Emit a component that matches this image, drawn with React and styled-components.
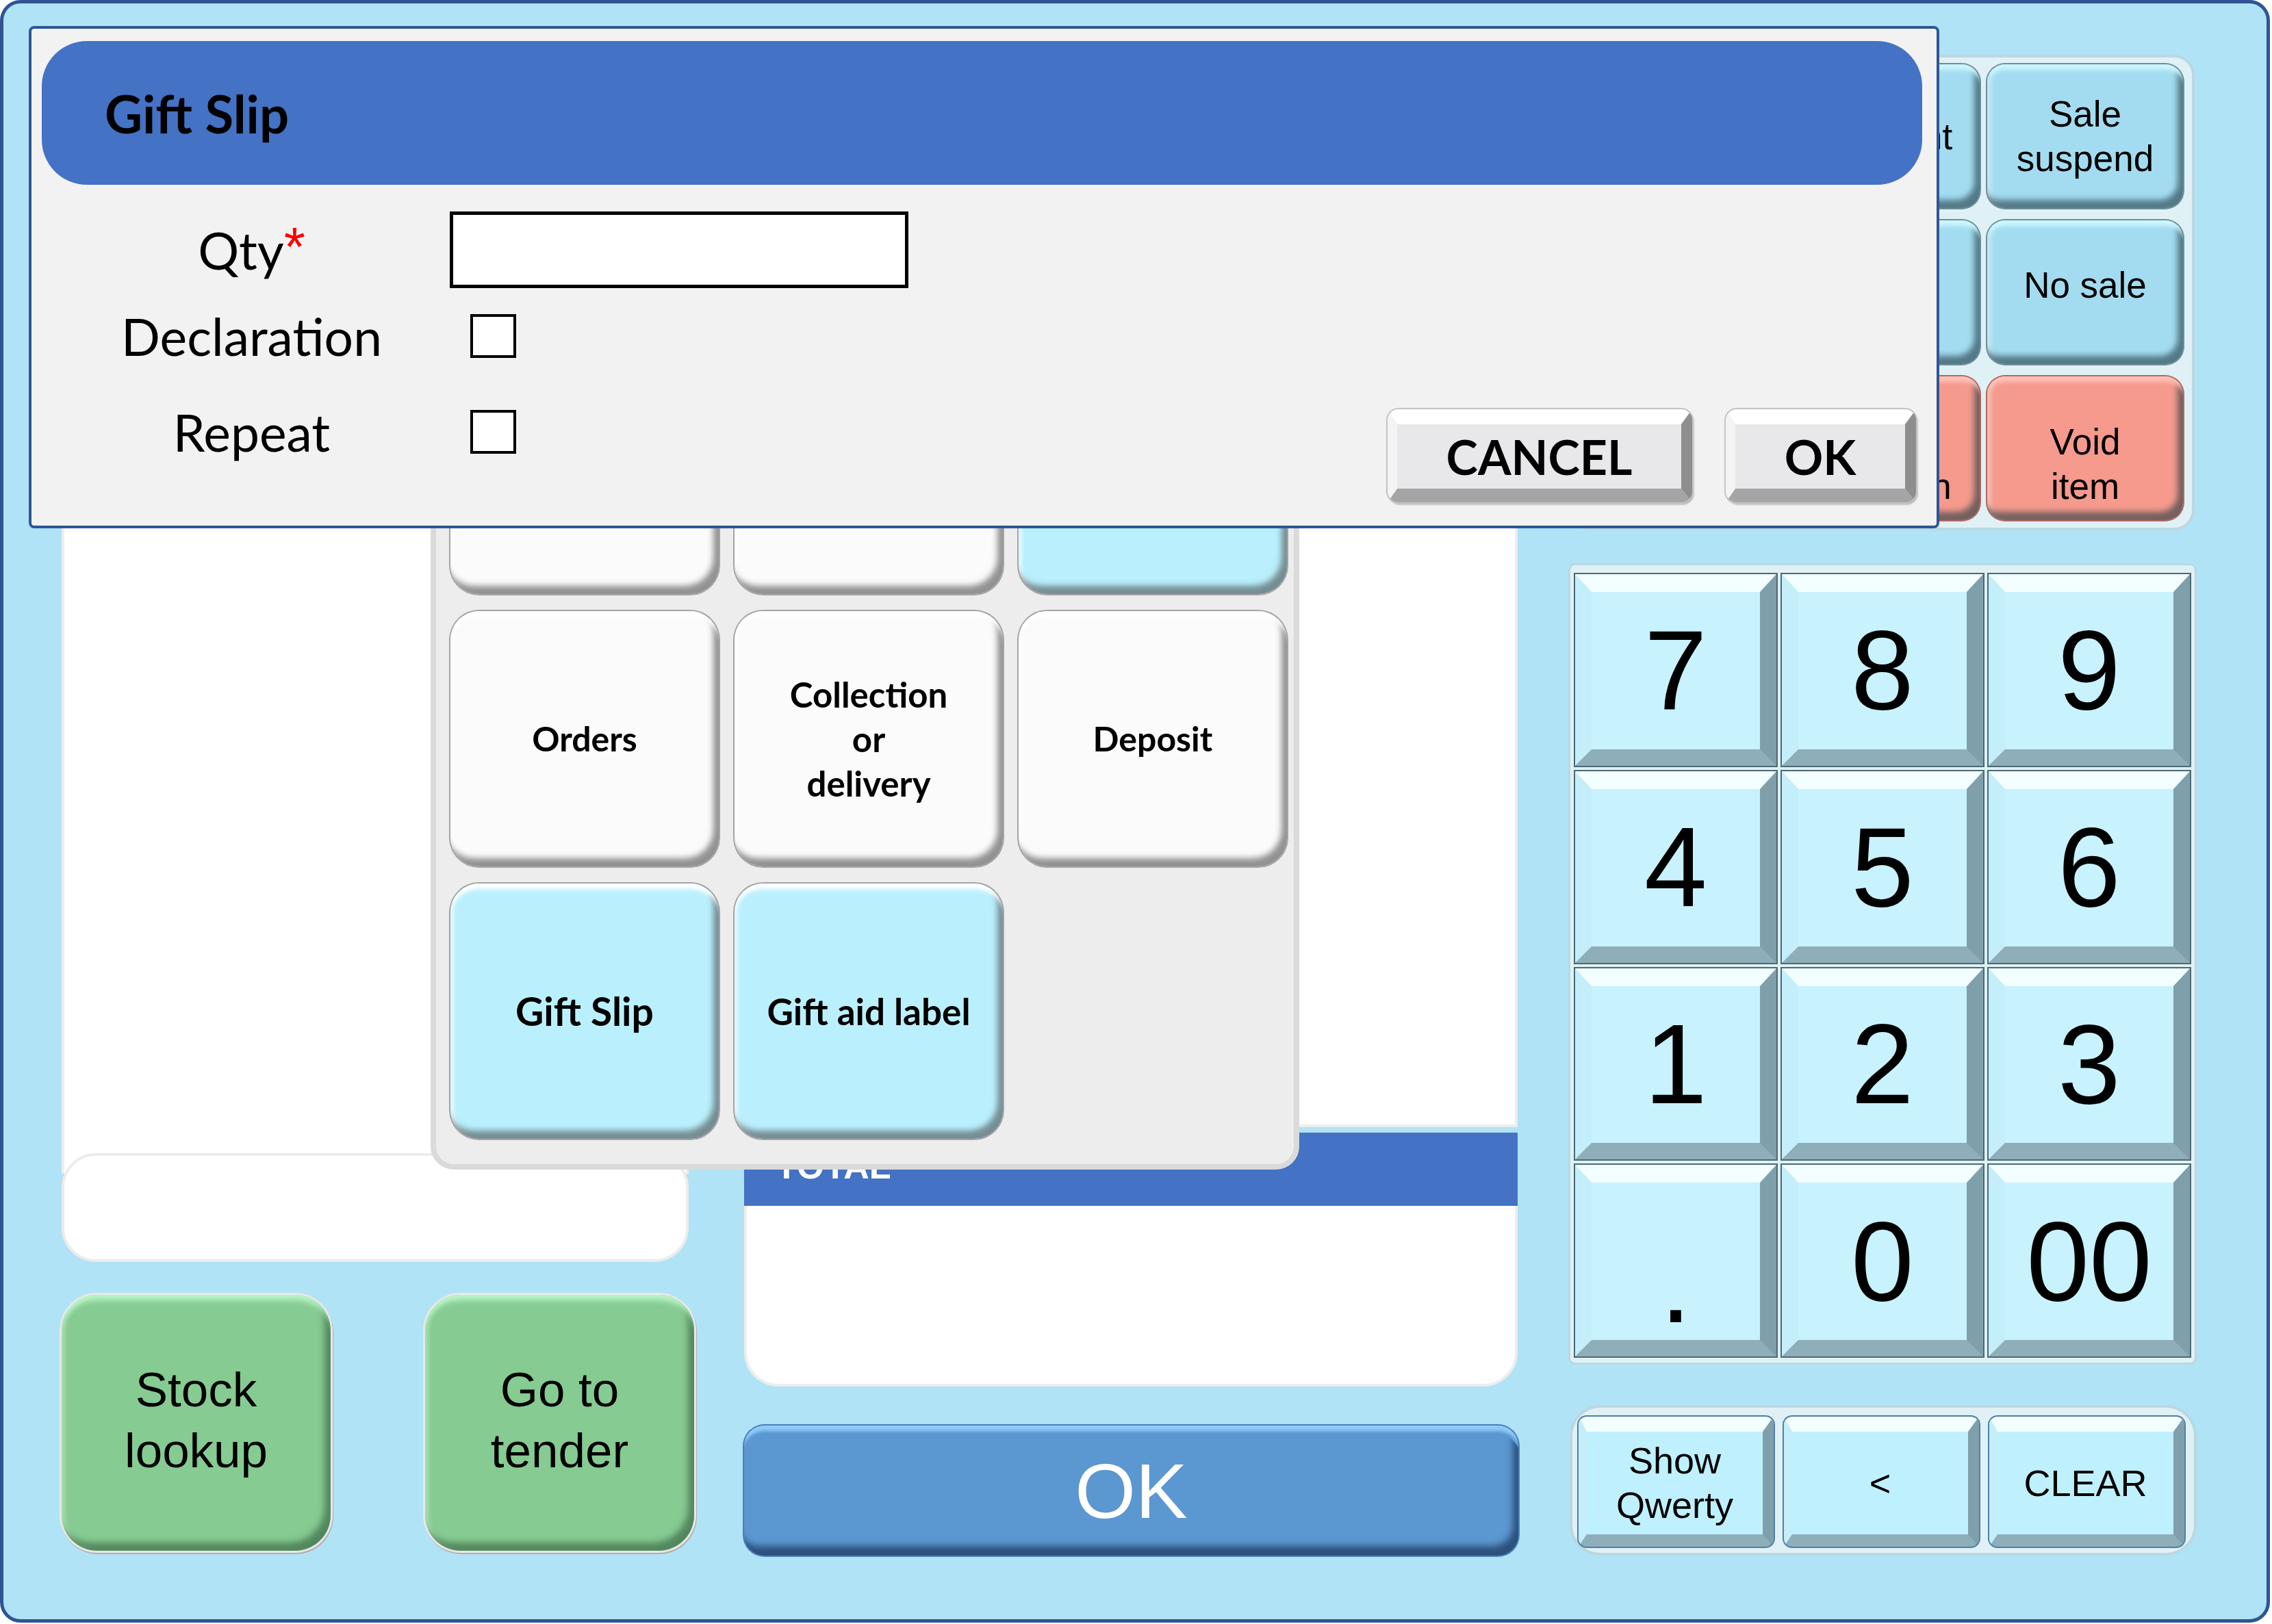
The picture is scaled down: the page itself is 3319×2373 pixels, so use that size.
import React from "react";
import styled, { createGlobalStyle, css } from "styled-components";

const GlobalStyle = createGlobalStyle`
  body {
    margin: 0;
    background: #ffffff;
    font-family: "Liberation Sans", Arial, sans-serif;
  }
`;

const Frame = styled.div`
  position: relative;
  box-sizing: border-box;
  width: 3316px;
  height: 2371px;
  border: 5px solid #2f5597;
  border-radius: 30px;
  background: #b0e3f5;
  display: flex;
  align-items: flex-start;
  gap: 73px;
  padding: 75px 98px 0 85px;
`;

const Column = styled.div`
  display: flex;
  flex-direction: column;
  width: ${(p) => p.$width}px;
`;

/* left column */
const ItemPanel = styled.div`
  box-sizing: border-box;
  width: 916px;
  height: 1635px;
  background: #ffffff;
  border: 4px solid #eeeeee;
  border-bottom: none;
  border-radius: 40px 40px 0 0;
`;

const SubtotalBox = styled.div`
  box-sizing: border-box;
  width: 916px;
  height: 159px;
  margin-top: -30px;
  background: #ffffff;
  border: 4px solid #ececec;
  border-radius: 50px;
`;

const GreenRow = styled.div`
  display: flex;
  justify-content: space-between;
  margin-top: 48px;
`;

const glossy = css`
  display: flex;
  align-items: center;
  justify-content: center;
  text-align: center;
  box-sizing: border-box;
`;

const GreenButton = styled.div`
  ${glossy};
  width: 393px;
  height: 374px;
  padding-bottom: 8px;
  border-radius: 52px;
  background: #86cb92;
  font-size: 71px;
  line-height: 89px;
  color: #000;
  box-shadow: inset 0 16px 8px -8px #b9f5c6, inset -9px -12px 10px rgba(40, 80, 50, 0.55),
    inset 5px 0 6px rgba(220, 255, 225, 0.4), 0 0 0 3px #e8e8e8, 1px 2px 0 3px #b0b0b0;
`;

/* middle column */
const ListPanel = styled.div`
  box-sizing: border-box;
  width: 1130px;
  height: 1567px;
  background: #ffffff;
  border: 4px solid #eeeeee;
  border-radius: 40px 40px 0 0;
`;

const TotalHeader = styled.div`
  box-sizing: border-box;
  width: 1130px;
  height: 107px;
  margin-top: 8px;
  background: #4472c4;
  color: #ffffff;
  font-weight: 700;
  font-size: 52px;
  padding-left: 46px;
  display: flex;
  align-items: center;
  padding-bottom: 10px;
`;

const TotalBody = styled.div`
  box-sizing: border-box;
  width: 1130px;
  height: 264px;
  background: #ffffff;
  border: 4px solid #eeeeee;
  border-top: none;
  border-radius: 0 0 50px 50px;
`;

const TenderOk = styled.div`
  ${glossy};
  width: 1131px;
  height: 190px;
  margin-top: 57px;
  border-radius: 30px;
  background: #5b97d0;
  color: #ffffff;
  font-size: 114px;
  box-shadow: inset 0 12px 4px -4px #8fcbf8, inset 0 18px 0 -4px #5b97d0,
    inset -8px -14px 10px rgba(20, 45, 80, 0.65), 0 0 0 2px #4b80b8;
`;

/* right column */
const FunctionPanel = styled.div`
  box-sizing: border-box;
  width: 913px;
  height: 695px;
  padding: 10px 0 0 12px;
  background: #e0f1f6;
  border: 4px solid #bad8e1;
  border-radius: 30px;
  display: grid;
  grid-template-columns: repeat(3, 286px);
  grid-auto-rows: 210px;
  column-gap: 11px;
  row-gap: 18px;
`;

const FunctionButton = styled.div`
  ${glossy};
  padding: ${(p) => Math.max(0, p.$shift || 0) * 2}px 40px
    ${(p) => Math.max(0, -(p.$shift || 0)) * 2}px;
  border-radius: 26px;
  background: ${(p) => (p.$tone === "red" ? "#f59a8d" : "#a3dcf0")};
  font-size: 53px;
  line-height: 65px;
  color: #000;
  box-shadow: inset 0 16px 6px -8px
      ${(p) => (p.$tone === "red" ? "#ffc2b8" : "#cdf6ff")},
    inset -8px -12px 8px rgba(30, 55, 65, 0.6), inset 6px 0 6px rgba(255, 255, 255, 0.35),
    0 0 0 2px ${(p) => (p.$tone === "red" ? "#b06a60" : "#6b909c")};
`;

const Numpad = styled.div`
  box-sizing: border-box;
  width: 918px;
  height: 1171px;
  margin-top: 48px;
  margin-left: -2px;
  padding: 13px 7px 9px;
  background: #e0f1f6;
  border: 3px solid #bad8e1;
  border-radius: 10px;
  display: grid;
  grid-template-columns: repeat(3, 1fr);
  grid-template-rows: repeat(4, 1fr);
  gap: 8px;
`;

const bevel = css`
  box-sizing: border-box;
  background: #c8f2fd;
  border-style: solid;
  border-color: #f2feff #7fa0ab #8eafb9 #c4eef9;
  box-shadow: 0 0 0 2px #4d6a74;
`;

const NumKey = styled.div`
  ${bevel};
  border-width: 26px 24px 24px 24px;
  display: flex;
  justify-content: center;
  align-items: ${(p) => (p.$low ? "flex-end" : "center")};
  font-size: 165px;
  line-height: 1;
  color: #000;
`;

const BottomPanel = styled.div`
  box-sizing: border-box;
  width: 916px;
  height: 220px;
  margin-top: 59px;
  padding: 13px 0 0 9px;
  background: #e0f1f6;
  border: 4px solid #bad8e1;
  border-radius: 45px;
  display: flex;
  gap: 15px;
`;

const BottomKey = styled.div`
  ${bevel};
  ${glossy};
  width: 285px;
  height: 190px;
  border-width: 22px 16px 18px 12px;
  border-radius: 12px;
  background: #bff0fd;
  box-shadow: 0 0 0 2px #4f7fa8;
  font-size: 54px;
  line-height: 65px;
  color: #000;
  padding: 0 30px;
`;

/* gift popup */
const Popup = styled.div`
  position: absolute;
  left: 624px;
  top: 461px;
  box-sizing: border-box;
  width: 1269px;
  height: 1243px;
  padding: 21px 0 0 21px;
  background: #ededed;
  border: 8px solid #dadada;
  border-radius: 34px;
  display: grid;
  grid-template-columns: repeat(3, 392px);
  grid-auto-rows: 373px;
  column-gap: 23px;
  row-gap: 25px;
`;

const PopupButton = styled.div`
  ${glossy};
  border-radius: 42px;
  background: ${(p) => (p.$tone === "blue" ? "#baf0fd" : "#fbfbfb")};
  font-family: Lato, "Open Sans", sans-serif;
  font-weight: 700;
  font-size: ${(p) => p.$size || 50}px;
  line-height: 65px;
  color: #000;
  box-shadow: inset 0 14px 6px -6px #ffffff, inset -8px -12px 8px rgba(60, 60, 60, 0.55),
    inset 5px 0 5px rgba(255, 255, 255, 0.6), 0 0 0 2px #a4a4a4;
`;

/* gift slip dialog */
const Dialog = styled.div`
  position: absolute;
  left: 37px;
  top: 33px;
  box-sizing: border-box;
  width: 2791px;
  height: 734px;
  background: #f2f2f2;
  border: 4px solid #2f5597;
  border-radius: 8px;
  display: flex;
  flex-direction: column;
  font-family: Lato, "Open Sans", sans-serif;
`;

const DialogHeader = styled.div`
  height: 210px;
  margin: 18px 21px 0 15px;
  padding-left: 92px;
  border-radius: 66px;
  background: #4472c4;
  display: flex;
  align-items: center;
  font-size: 76px;
  font-weight: 700;
  color: #000;
`;

const DialogBody = styled.div`
  flex: 1;
  display: flex;
  justify-content: space-between;
  padding: 39px 30px 34px 54px;
`;

const Form = styled.div`
  display: grid;
  grid-template-columns: 535px auto;
  grid-template-rows: 112px 140px 140px;
  column-gap: 22px;
  align-items: center;
  align-self: flex-start;
`;

const FieldLabel = styled.div`
  text-align: center;
  font-size: 75px;
  line-height: 1;
  color: #000;
`;

const Required = styled.span`
  color: #ff0000;
  font-family: "Liberation Sans", Arial, sans-serif;
  font-size: 80px;
  line-height: 0;
  position: relative;
  top: -6px;
`;

const TextBox = styled.div`
  box-sizing: border-box;
  width: 670px;
  height: 112px;
  background: #ffffff;
  border: 5px solid #000;
`;

const CheckBox = styled.div`
  box-sizing: border-box;
  width: 67px;
  height: 64px;
  margin-left: 30px;
  background: #ffffff;
  border: 4px solid #000;
`;

const Actions = styled.div`
  display: flex;
  gap: 49px;
  align-self: flex-end;
`;

const DialogButton = styled.div`
  ${glossy};
  width: ${(p) => p.$width}px;
  height: 136px;
  background: #e8e7ea;
  border-style: solid;
  border-width: 22px 16px 20px 14px;
  border-color: #ffffff #8e8e8e #a5a5a5 #f4f4f4;
  border-radius: 16px;
  box-shadow: 0 0 0 2px #c4c4c4, 2px 3px 3px rgba(0, 0, 0, 0.35);
  font-size: 70px;
  font-weight: 700;
  line-height: 1;
  color: #000;
`;

const functionKeys = [
  { label: "Price check" },
  { label: "Discount" },
  { label: "Sale suspend" },
  { label: "Refund" },
  { label: "Till reports" },
  { label: "No sale", shift: -11 },
  { label: "Void sale", tone: "red", shift: 23 },
  { label: "Void donation", tone: "red", shift: 23 },
  { label: "Void item", tone: "red", shift: 23 },
];

const digits = ["7", "8", "9", "4", "5", "6", "1", "2", "3", ".", "0", "00"];

const popupKeys = [
  { label: "Returns" },
  { label: "Exchange" },
  { label: "Vouchers", tone: "blue" },
  { label: "Orders" },
  { label: "Collection\nor\ndelivery", size: 51 },
  { label: "Deposit" },
  { label: "Gift Slip", tone: "blue", size: 57 },
  { label: "Gift aid label", tone: "blue", size: 53 },
];

const lines = (text) =>
  text.split("\n").map((t, i) => (
    <React.Fragment key={i}>
      {i > 0 && <br />}
      {t}
    </React.Fragment>
  ));

export default function App() {
  return (
    <>
      <GlobalStyle />
      <Frame>
        <Column $width={924}>
          <ItemPanel />
          <SubtotalBox />
          <GreenRow>
            <GreenButton>
              Stock
              <br />
              lookup
            </GreenButton>
            <GreenButton>
              Go to
              <br />
              tender
            </GreenButton>
          </GreenRow>
        </Column>

        <Column $width={1133}>
          <ListPanel />
          <TotalHeader>TOTAL</TotalHeader>
          <TotalBody />
          <TenderOk>OK</TenderOk>
        </Column>

        <Column $width={920}>
          <FunctionPanel>
            {functionKeys.map((k) => (
              <FunctionButton key={k.label} $tone={k.tone} $shift={k.shift}>
                {k.label}
              </FunctionButton>
            ))}
          </FunctionPanel>
          <Numpad>
            {digits.map((d) => (
              <NumKey key={d} $low={d === "."}>
                {d}
              </NumKey>
            ))}
          </Numpad>
          <BottomPanel>
            <BottomKey>Show Qwerty</BottomKey>
            <BottomKey>&lt;</BottomKey>
            <BottomKey>CLEAR</BottomKey>
          </BottomPanel>
        </Column>

        <Popup>
          {popupKeys.map((k) => (
            <PopupButton key={k.label} $tone={k.tone} $size={k.size}>
              <div>{lines(k.label)}</div>
            </PopupButton>
          ))}
        </Popup>

        <Dialog>
          <DialogHeader>Gift Slip</DialogHeader>
          <DialogBody>
            <Form>
              <FieldLabel>
                Qty<Required>*</Required>
              </FieldLabel>
              <TextBox />
              <FieldLabel>Declaration</FieldLabel>
              <CheckBox />
              <FieldLabel>Repeat</FieldLabel>
              <CheckBox />
            </Form>
            <Actions>
              <DialogButton $width={445}>CANCEL</DialogButton>
              <DialogButton $width={278}>OK</DialogButton>
            </Actions>
          </DialogBody>
        </Dialog>
      </Frame>
    </>
  );
}
